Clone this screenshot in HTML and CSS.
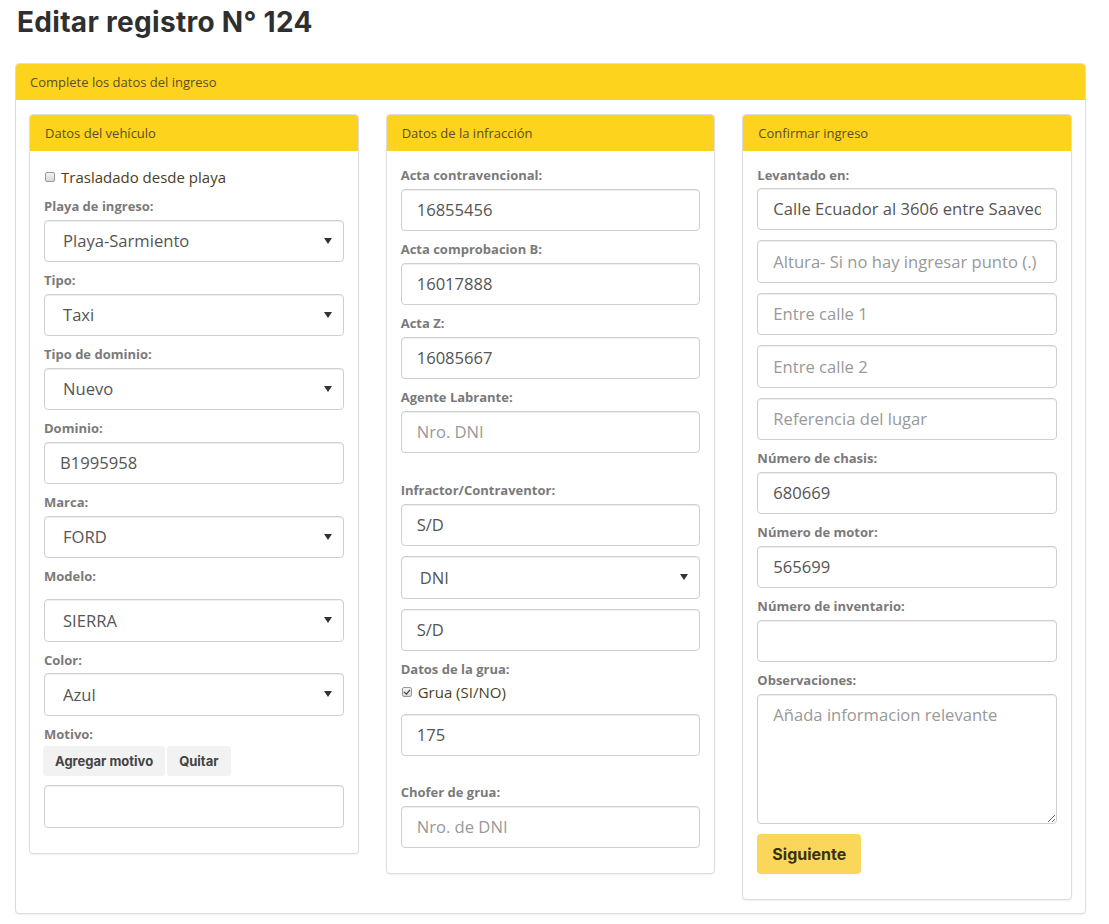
FILE: index.html
```html
<!DOCTYPE html>
<html lang="es">
<head>
<meta charset="utf-8">
<title>Editar registro</title>
<link rel="stylesheet" href="styles.css">
</head>
<body>
<div class="page">
  <h1 class="title">Editar registro N° 124</h1>
  <div class="panel outer">
    <div class="panel-heading">Complete los datos del ingreso</div>
    <div class="outer-body">
      <div class="panel col">
        <div class="panel-heading">Datos del vehículo</div>
        <div class="panel-body">
          <label class="check first"><input type="checkbox"> Trasladado desde playa</label>
          <div class="group">
            <label class="lbl">Playa de ingreso:</label>
            <select class="ctl"><option>Playa-Sarmiento</option></select>
          </div>
          <div class="group">
            <label class="lbl">Tipo:</label>
            <select class="ctl"><option>Taxi</option></select>
          </div>
          <div class="group">
            <label class="lbl">Tipo de dominio:</label>
            <select class="ctl"><option>Nuevo</option></select>
          </div>
          <div class="group">
            <label class="lbl">Dominio:</label>
            <input class="ctl" type="text" value="B1995958">
          </div>
          <div class="group">
            <label class="lbl">Marca:</label>
            <select class="ctl"><option>FORD</option></select>
          </div>
          <div class="group">
            <label class="lbl">Modelo:</label>
            <select class="ctl spaced"><option>SIERRA</option></select>
          </div>
          <div class="group">
            <label class="lbl">Color:</label>
            <select class="ctl"><option>Azul</option></select>
          </div>
          <div class="group">
            <label class="lbl tight">Motivo:</label>
            <div class="btns">
              <button class="btn-light" type="button">Agregar motivo</button>
              <button class="btn-light" type="button">Quitar</button>
            </div>
            <input class="ctl" type="text">
          </div>
        </div>
      </div>

      <div class="panel col">
        <div class="panel-heading">Datos de la infracción</div>
        <div class="panel-body">
          <div class="group">
            <label class="lbl">Acta contravencional:</label>
            <input class="ctl" type="text" value="16855456">
          </div>
          <div class="group">
            <label class="lbl">Acta comprobacion B:</label>
            <input class="ctl" type="text" value="16017888">
          </div>
          <div class="group">
            <label class="lbl">Acta Z:</label>
            <input class="ctl" type="text" value="16085667">
          </div>
          <div class="group">
            <label class="lbl">Agente Labrante:</label>
            <input class="ctl" type="text" placeholder="Nro. DNI">
          </div>
          <div class="group gap-top">
            <label class="lbl">Infractor/Contraventor:</label>
            <input class="ctl" type="text" value="S/D">
          </div>
          <div class="group">
            <select class="ctl"><option>DNI</option></select>
          </div>
          <div class="group">
            <input class="ctl" type="text" value="S/D">
          </div>
          <div class="group">
            <label class="lbl tight">Datos de la grua:</label>
            <label class="check"><input type="checkbox" checked> Grua (SI/NO)</label>
            <input class="ctl" type="text" value="175">
          </div>
          <div class="group gap-top2">
            <label class="lbl">Chofer de grua:</label>
            <input class="ctl" type="text" placeholder="Nro. de DNI">
          </div>
        </div>
      </div>

      <div class="panel col">
        <div class="panel-heading">Confirmar ingreso</div>
        <div class="panel-body">
          <div class="group">
            <label class="lbl tight">Levantado en:</label>
            <input class="ctl" type="text" value="Calle Ecuador al 3606 entre Saavedra y Pichincha">
          </div>
          <div class="group">
            <input class="ctl" type="text" placeholder="Altura- Si no hay ingresar punto (.)">
          </div>
          <div class="group">
            <input class="ctl" type="text" placeholder="Entre calle 1">
          </div>
          <div class="group">
            <input class="ctl" type="text" placeholder="Entre calle 2">
          </div>
          <div class="group">
            <input class="ctl" type="text" placeholder="Referencia del lugar">
          </div>
          <div class="group">
            <label class="lbl">Número de chasis:</label>
            <input class="ctl" type="text" value="680669">
          </div>
          <div class="group">
            <label class="lbl">Número de motor:</label>
            <input class="ctl" type="text" value="565699">
          </div>
          <div class="group">
            <label class="lbl">Número de inventario:</label>
            <input class="ctl" type="text">
          </div>
          <div class="group">
            <label class="lbl">Observaciones:</label>
            <textarea class="ctl area" placeholder="Añada informacion relevante"></textarea>
          </div>
          <div class="group">
            <button class="btn-primary" type="button">Siguiente</button>
          </div>
        </div>
      </div>
    </div>
  </div>
</div>
</body>
</html>
```

FILE: styles.css
```css
* { box-sizing: border-box; }

html, body {
  margin: 0;
  padding: 0;
  background: #ffffff;
}

body {
  font-family: "Open Sans", "Liberation Sans", sans-serif;
  color: #333;
  font-size: 14px;
}

.page {
  padding: 7px 23px 11px 15px;
}

.title {
  font-family: "Inter", "Noto Sans", sans-serif;
  font-weight: 700;
  font-size: 28px;
  line-height: 30px;
  margin: 0 0 26px 2px;
  color: #2f2f2f;
  letter-spacing: 0.3px;
}

.panel {
  background: #fff;
  border: 1px solid #ddd;
  border-radius: 4px;
  box-shadow: 0 1px 2px rgba(0, 0, 0, 0.06);
}

.panel-heading {
  background: #fdd31d;
  height: 36px;
  line-height: 36px;
  padding: 0 15px;
  font-size: 13px;
  color: #5b4e2b;
  border-radius: 3px 3px 0 0;
}

.outer > .panel-heading {
  padding: 0 14px;
}

.outer-body {
  display: grid;
  grid-template-columns: 1fr 1fr 1fr;
  column-gap: 27px;
  align-items: start;
  padding: 14px 13px 13px 13px;
}

.panel-body {
  padding: 16px 14px 15px 14px;
}

.group {
  margin-bottom: 10px;
}

.gap-top { margin-top: 29px; }
.gap-top2 { margin-top: 28px; }

.lbl {
  display: block;
  font-size: 13px;
  font-weight: 700;
  color: #7a7a7a;
  line-height: 17px;
  margin-bottom: 4.5px;
}

.lbl.tight { margin-bottom: 3.5px; }

.check {
  display: flex;
  align-items: center;
  gap: 6px;
  font-size: 15px;
  color: #4a3f22;
  line-height: 20px;
  height: 20px;
}

.check.first { margin-bottom: 11px; }

.check input {
  appearance: none;
  -webkit-appearance: none;
  position: relative;
  margin: 0 0 0 1px;
  width: 10px;
  height: 10px;
  border: 1px solid #9a9a9a;
  border-radius: 2px;
  background: linear-gradient(#f4f4f4, #d8d8d8);
}

.check input:checked::after {
  content: "";
  position: absolute;
  left: 2.5px;
  top: 0.5px;
  width: 2.5px;
  height: 5px;
  border: solid #333;
  border-width: 0 1.5px 1.5px 0;
  transform: rotate(40deg);
}

.group .check { margin-bottom: 12px; }

.ctl {
  display: block;
  width: 100%;
  height: 42.5px;
  padding: 0 15px;
  font-family: "Open Sans", "Liberation Sans", sans-serif;
  font-size: 16.6px;
  color: #555;
  background: #fff;
  border: 1px solid #cfcfcf;
  border-radius: 4px;
  box-shadow: inset 0 1px 1px rgba(0, 0, 0, 0.075);
  outline: none;
}

.ctl::placeholder { color: #999; }

select.ctl {
  appearance: none;
  -webkit-appearance: none;
  padding-left: 18px;
  background-image: url("data:image/svg+xml;utf8,<svg xmlns='http://www.w3.org/2000/svg' width='8' height='6'><path d='M0 0h8L4 6z' fill='%23333'/></svg>");
  background-repeat: no-repeat;
  background-position: right 11px center;
}

select.spaced { margin-top: 14px; }

textarea.area {
  height: 130px;
  padding: 8px 15px;
  resize: vertical;
  line-height: 24px;
}

.btns {
  display: flex;
  gap: 2px;
  margin-bottom: 9px;
  margin-left: -1px;
}

.btn-light {
  font-family: "Inter", "Noto Sans", sans-serif;
  font-weight: 700;
  font-size: 13px;
  color: #444;
  background: #f2f2f2;
  border: none;
  border-radius: 3px;
  height: 30px;
  padding: 0 12px;
}

.btn-primary {
  font-family: "Inter", "Noto Sans", sans-serif;
  font-weight: 700;
  font-size: 16px;
  color: #3a3110;
  background: #fad75a;
  border: none;
  border-radius: 4px;
  height: 40px;
  padding: 0 15px;
}
```
